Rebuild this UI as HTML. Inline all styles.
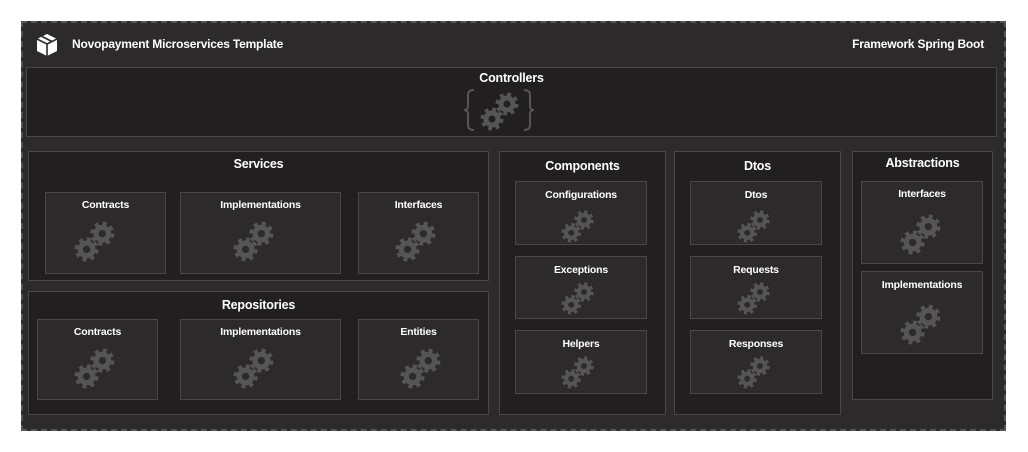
<!DOCTYPE html>
<html><head><meta charset="utf-8"><style>
body{margin:0;width:1028px;height:452px;background:#fff;position:relative;overflow:hidden;font-family:"Liberation Sans",Arial,sans-serif;font-weight:bold;color:#fff}
.b{position:absolute;box-sizing:border-box;border:1px solid #4a4748}
.d{background:#221f20}
.l{background:#2d2a2b}
.t{position:absolute;left:0;right:0;text-align:center;font-size:10.5px;letter-spacing:-0.2px}
.h{position:absolute;left:0;right:0;text-align:center;font-size:12.5px;letter-spacing:-0.2px}
svg.g{position:absolute}
</style></head><body>
<svg width="0" height="0" style="position:absolute"><defs>
<g id="gr"><circle r="9.5" fill="none" stroke="#555" stroke-width="4" stroke-dasharray="3.73 3.73"/><circle r="6" fill="none" stroke="#555" stroke-width="5"/></g>
<symbol id="gp" viewBox="0 0 40 40"><use href="#gr" x="12" y="28"/><use href="#gr" x="27" y="13"/></symbol>
</defs></svg>
<div style="position:absolute;left:21px;top:21px;width:985px;height:410px;box-sizing:border-box;border:2px dashed #555;background:#2d2a2b"></div>
<svg style="position:absolute;left:36px;top:33px" width="22" height="24" viewBox="0 0 22 24"><path d="M11 1 L21 6 L21 18 L11 23 L1 18 L1 6 Z" fill="#fff"/><path d="M1 6 L11 11 L21 6 M11 11 L11 23" stroke="#2d2a2b" stroke-width="1.6" fill="none"/><path d="M6 3.5 L16 8.5" stroke="#2d2a2b" stroke-width="1.6"/></svg>
<div style="position:absolute;left:72px;top:37px;font-size:12px;letter-spacing:-0.2px">Novopayment Microservices Template</div>
<div style="position:absolute;right:44px;top:37px;font-size:12px;letter-spacing:-0.2px">Framework Spring Boot</div>

<div class="b d" style="left:26px;top:67px;width:971px;height:70px"><div class="h" style="top:3px">Controllers</div></div>
<svg style="position:absolute;left:462px;top:88px" width="76" height="44" viewBox="0 0 76 44"><path d="M12 2 Q6 2 6 7 L6 18 Q6 22 2 22 Q6 22 6 26 L6 37 Q6 42 12 42" fill="none" stroke="#555" stroke-width="2"/><path d="M62 2 Q68 2 68 7 L68 18 Q68 22 72 22 Q68 22 68 26 L68 37 Q68 42 62 42" fill="none" stroke="#555" stroke-width="2"/></svg>
<svg class="g" style="left:480px;top:91px" width="40" height="40"><use href="#gp"/></svg>

<div class="b d" style="left:28px;top:151px;width:461px;height:130px"><div class="h" style="top:5px">Services</div></div>
<div class="b d" style="left:28px;top:291px;width:461px;height:124px"><div class="h" style="top:6px">Repositories</div></div>
<div class="b d" style="left:499px;top:151px;width:167px;height:264px"><div class="h" style="top:7px">Components</div></div>
<div class="b d" style="left:674px;top:151px;width:167px;height:264px"><div class="h" style="top:7px">Dtos</div></div>
<div class="b d" style="left:852px;top:151px;width:141px;height:249px"><div class="h" style="top:4px">Abstractions</div></div>

<div class="b l" style="left:45px;top:192px;width:121px;height:82px"><div class="t" style="top:6px">Contracts</div><svg class="g" style="left:28px;top:27px" width="42" height="42"><use href="#gp"/></svg></div>
<div class="b l" style="left:180px;top:192px;width:161px;height:82px"><div class="t" style="top:6px">Implementations</div><svg class="g" style="left:52px;top:27px" width="42" height="42"><use href="#gp"/></svg></div>
<div class="b l" style="left:358px;top:192px;width:121px;height:82px"><div class="t" style="top:6px">Interfaces</div><svg class="g" style="left:36px;top:27px" width="42" height="42"><use href="#gp"/></svg></div>

<div class="b l" style="left:37px;top:319px;width:121px;height:81px"><div class="t" style="top:6px">Contracts</div><svg class="g" style="left:36px;top:27px" width="42" height="42"><use href="#gp"/></svg></div>
<div class="b l" style="left:180px;top:319px;width:161px;height:81px"><div class="t" style="top:6px">Implementations</div><svg class="g" style="left:52px;top:27px" width="42" height="42"><use href="#gp"/></svg></div>
<div class="b l" style="left:358px;top:319px;width:121px;height:81px"><div class="t" style="top:6px">Entities</div><svg class="g" style="left:41px;top:27px" width="42" height="42"><use href="#gp"/></svg></div>

<div class="b l" style="left:515px;top:181px;width:132px;height:64px"><div class="t" style="top:7px">Configurations</div><svg class="g" style="left:45px;top:27px" width="34" height="34"><use href="#gp"/></svg></div>
<div class="b l" style="left:515px;top:256px;width:132px;height:63px"><div class="t" style="top:7px">Exceptions</div><svg class="g" style="left:45px;top:24px" width="34" height="34"><use href="#gp"/></svg></div>
<div class="b l" style="left:515px;top:330px;width:132px;height:64px"><div class="t" style="top:7px">Helpers</div><svg class="g" style="left:45px;top:24px" width="34" height="34"><use href="#gp"/></svg></div>

<div class="b l" style="left:690px;top:181px;width:132px;height:64px"><div class="t" style="top:7px">Dtos</div><svg class="g" style="left:46px;top:27px" width="34" height="34"><use href="#gp"/></svg></div>
<div class="b l" style="left:690px;top:256px;width:132px;height:63px"><div class="t" style="top:7px">Requests</div><svg class="g" style="left:46px;top:24px" width="34" height="34"><use href="#gp"/></svg></div>
<div class="b l" style="left:690px;top:330px;width:132px;height:64px"><div class="t" style="top:7px">Responses</div><svg class="g" style="left:46px;top:24px" width="34" height="34"><use href="#gp"/></svg></div>

<div class="b l" style="left:861px;top:181px;width:122px;height:83px"><div class="t" style="top:6px">Interfaces</div><svg class="g" style="left:38px;top:31px" width="42" height="42"><use href="#gp"/></svg></div>
<div class="b l" style="left:861px;top:271px;width:122px;height:83px"><div class="t" style="top:7px">Implementations</div><svg class="g" style="left:38px;top:31px" width="42" height="42"><use href="#gp"/></svg></div>
</body></html>
